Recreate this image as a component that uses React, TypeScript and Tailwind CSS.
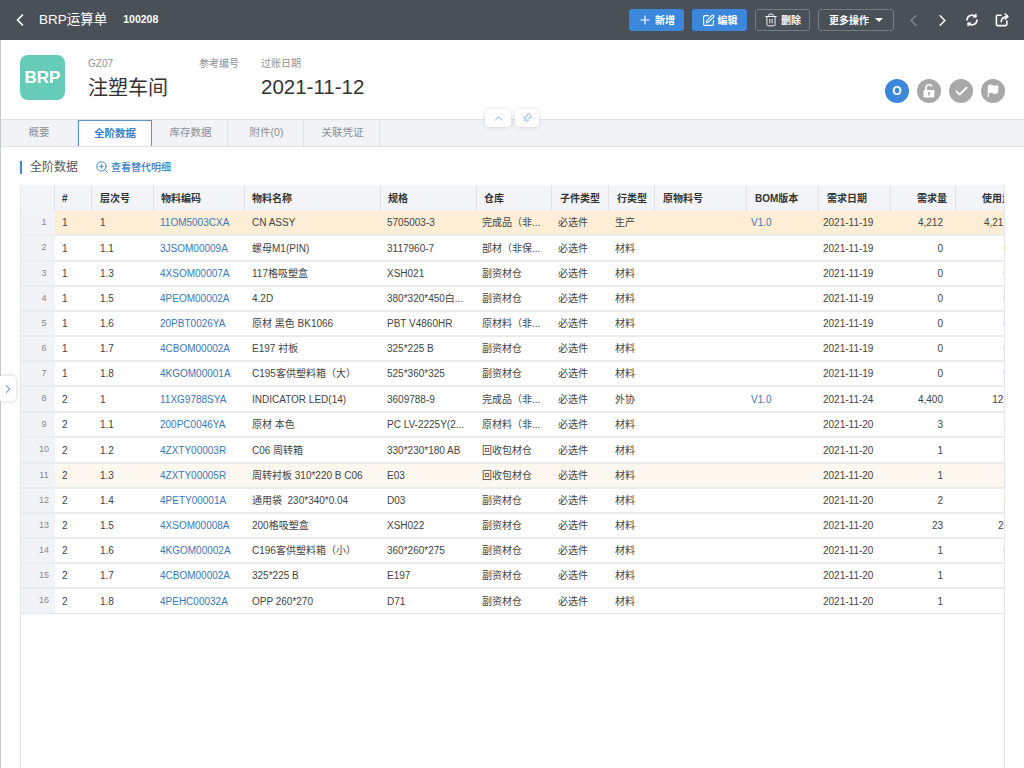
import { Check, ChevronLeft, ChevronRight, ChevronUp, Flag, Pin, Plus, SquarePen, Trash2, ZoomIn } from 'lucide-react';

const GRID = 'grid grid-cols-[34px_37px_62px_91px_136px_96px_75px_57px_46px_92px_72px_72px_65px_65px]';

type Row = {
  a: string; b: string; code: string; name: string; spec: string; wh: string;
  line: string; ver?: string; date: string; qty: string; used: string;
  h: string; bg?: string; thin?: boolean;
};

const rows: Row[] = [
  { a: '1', b: '1', code: '11OM5003CXA', name: 'CN ASSY', spec: '5705003-3', wh: '完成品（非...', line: '生产', ver: 'V1.0', date: '2021-11-19', qty: '4,212', used: '4,212', h: 'h-[25px]', bg: 'bg-[#fdeed5]' },
  { a: '1', b: '1.1', code: '3JSOM00009A', name: '螺母M1(PIN)', spec: '3117960-7', wh: '部材（非保...', line: '材料', date: '2021-11-19', qty: '0', used: '0', h: 'h-[26px]' },
  { a: '1', b: '1.3', code: '4XSOM00007A', name: '117格吸塑盒', spec: 'XSH021', wh: '副资材仓', line: '材料', date: '2021-11-19', qty: '0', used: '0', h: 'h-[25px]' },
  { a: '1', b: '1.5', code: '4PEOM00002A', name: '4.2D', spec: '380*320*450白...', wh: '副资材仓', line: '材料', date: '2021-11-19', qty: '0', used: '0', h: 'h-[25px]' },
  { a: '1', b: '1.6', code: '20PBT0026YA', name: '原材 黑色 BK1066', spec: 'PBT V4860HR', wh: '原材料（非...', line: '材料', date: '2021-11-19', qty: '0', used: '0', h: 'h-[25px]' },
  { a: '1', b: '1.7', code: '4CBOM00002A', name: 'E197 衬板', spec: '325*225 B', wh: '副资材仓', line: '材料', date: '2021-11-19', qty: '0', used: '0', h: 'h-[25px]' },
  { a: '1', b: '1.8', code: '4KGOM00001A', name: 'C195客供塑料箱（大）', spec: '525*360*325', wh: '副资材仓', line: '材料', date: '2021-11-19', qty: '0', used: '0', h: 'h-[25px]' },
  { a: '2', b: '1', code: '11XG9788SYA', name: 'INDICATOR LED(14)', spec: '3609788-9', wh: '完成品（非...', line: '外协', ver: 'V1.0', date: '2021-11-24', qty: '4,400', used: '123', h: 'h-[26px]' },
  { a: '2', b: '1.1', code: '200PC0046YA', name: '原材 本色', spec: 'PC LV-2225Y(2...', wh: '原材料（非...', line: '材料', date: '2021-11-20', qty: '3', used: '3', h: 'h-[25px]' },
  { a: '2', b: '1.2', code: '4ZXTY00003R', name: 'C06 周转箱', spec: '330*230*180 AB', wh: '回收包材仓', line: '材料', date: '2021-11-20', qty: '1', used: '1', h: 'h-[26px]' },
  { a: '2', b: '1.3', code: '4ZXTY00005R', name: '周转衬板 310*220 B C06', spec: 'E03', wh: '回收包材仓', line: '材料', date: '2021-11-20', qty: '1', used: '1', h: 'h-[25px]', bg: 'bg-[#fdf8ef]' },
  { a: '2', b: '1.4', code: '4PETY00001A', name: '通用袋\u00a0\u00a0230*340*0.04', spec: 'D03', wh: '副资材仓', line: '材料', date: '2021-11-20', qty: '2', used: '2', h: 'h-[25px]' },
  { a: '2', b: '1.5', code: '4XSOM00008A', name: '200格吸塑盒', spec: 'XSH022', wh: '副资材仓', line: '材料', date: '2021-11-20', qty: '23', used: '23', h: 'h-[25px]' },
  { a: '2', b: '1.6', code: '4KGOM00002A', name: 'C196客供塑料箱（小）', spec: '360*260*275', wh: '副资材仓', line: '材料', date: '2021-11-20', qty: '1', used: '0', h: 'h-[25px]' },
  { a: '2', b: '1.7', code: '4CBOM00002A', name: '325*225 B', spec: 'E197', wh: '副资材仓', line: '材料', date: '2021-11-20', qty: '1', used: '1', h: 'h-[25px]' },
  { a: '2', b: '1.8', code: '4PEHC00032A', name: 'OPP 260*270', spec: 'D71', wh: '副资材仓', line: '材料', date: '2021-11-20', qty: '1', used: '1', h: 'h-[25px]', thin: true },
];

const Head = ({ label, cls = '' }: { label: string; cls?: string }) => (
  <div className={`flex items-center border-r border-[#dfe2e8] whitespace-nowrap ${cls}`}>{label}</div>
);

const Tab = ({ label, active }: { label: string; active?: boolean }) => (
  <div
    className={
      active
        ? 'flex w-[74px] items-center justify-center border border-b-0 border-[#5b93c7] bg-white text-[10.5px] font-semibold text-[#3a80c9]'
        : 'flex w-[76px] items-center justify-center border-r border-[#e0e2e7] pl-[2px] text-[10.5px] text-[#8a8f97]'
    }
  >
    {label}
  </div>
);

// refresh: two arcs with small heads, lucide's arrows sit too far out
const RefreshIcon = () => (
  <svg width="14" height="14" viewBox="0 0 14 14" fill="none" stroke="white" strokeWidth="1.6" strokeLinecap="round" className="ml-[13px]">
    <path d="M12 7a5 5 0 0 1-8.6 3.4" />
    <path d="M2 7a5 5 0 0 1 8.6-3.4" />
    <path d="M10.9 1.2v2.7H8.3" strokeWidth="1.4" />
    <path d="M3.1 12.8v-2.7h2.6" strokeWidth="1.4" />
  </svg>
);

const OpenIcon = () => (
  <svg width="14" height="14" viewBox="0 0 14 14" fill="none" stroke="white" strokeWidth="1.6" strokeLinecap="round" strokeLinejoin="round" className="ml-[16px] mr-[15px]">
    <path d="M6 2.2H2.4a1 1 0 0 0-1 1v8.4a1 1 0 0 0 1 1h8.4a1 1 0 0 0 1-1V8" />
    <path d="M6.2 8.6c.2-3 2-4.8 6.2-5" />
    <path d="M10.2 1l2.6 2.6-2.6 2.4" />
  </svg>
);

const LockIcon = () => (
  <svg width="14" height="16" viewBox="0 0 14 16">
    <path d="M4 7V4.6a3 3 0 0 1 5.8-1" fill="none" stroke="white" strokeWidth="1.6" />
    <path fillRule="evenodd" fill="white" d="M2.4 7h9.2a.8.8 0 0 1 .8.8v6a.8.8 0 0 1-.8.8H2.4a.8.8 0 0 1-.8-.8v-6a.8.8 0 0 1 .8-.8zM7 9.2a1.2 1.2 0 0 0-.6 2.2v1.4h1.2v-1.4A1.2 1.2 0 0 0 7 9.2z" />
  </svg>
);

const App = () => {
  return (
    <div className="relative flex h-[768px] w-[1024px] flex-col overflow-hidden bg-white font-['Liberation_Sans','Noto_Sans_CJK_SC',sans-serif] text-[#444]">
      {/* top bar */}
      <div className="flex h-10 shrink-0 items-center bg-[#4a5058] pl-[10px] text-white">
        <ChevronLeft size={20} strokeWidth={2} />
        <span className="ml-[9px] text-[13.5px]">BRP运算单</span>
        <span className="ml-[16px] text-[10.5px] font-bold">100208</span>
        <div className="ml-auto flex items-center">
          <button className="flex h-[22px] w-[55px] items-center justify-center gap-[3px] rounded-[3px] bg-[#3b87dc] text-[10px] font-semibold">
            <Plus size={14} strokeWidth={2} />新增
          </button>
          <button className="ml-2 flex h-[22px] w-[55px] items-center justify-center gap-[3px] rounded-[3px] bg-[#3b87dc] text-[10px] font-semibold">
            <SquarePen size={13} strokeWidth={2} />编辑
          </button>
          <button className="ml-2 flex h-[22px] w-[55px] items-center justify-center gap-[3px] rounded-[3px] border border-[#777c83] text-[10px] font-semibold">
            <Trash2 size={14} strokeWidth={1.6} />删除
          </button>
          <button className="ml-2 flex h-[22px] w-[76px] items-center justify-center gap-[6px] rounded-[3px] border border-[#777c83] text-[10px] font-semibold">
            更多操作
            <span className="h-0 w-0 border-x-[4px] border-t-[4px] border-x-transparent border-t-white" />
          </button>
          <ChevronLeft size={19} strokeWidth={1.8} className="ml-[10px] text-[#858a90]" />
          <ChevronRight size={19} strokeWidth={1.8} className="ml-[10px]" />
          <RefreshIcon />
          <OpenIcon />
        </div>
      </div>

      <div className="flex min-h-0 flex-1 flex-col border-l border-[#c9c9c9]">
        {/* document info */}
        <div className="flex h-[79px] shrink-0 pl-[19px] pt-[15px]">
          <div className="flex h-[45px] w-[45px] items-center justify-center rounded-lg bg-[#66ccb8] text-[17px] font-bold text-white">BRP</div>
          <div className="ml-[23px] w-[111px] pt-[2px]">
            <div className="text-[10px] leading-[14px] text-[#8d9199]">GZ07</div>
            <div className="mt-[3px] text-[20px] leading-[28px] text-[#333]">注塑车间</div>
          </div>
          <div className="w-[62px] pt-[2px] text-[10px] leading-[14px] text-[#8d9199]">参考编号</div>
          <div className="pt-[2px]">
            <div className="text-[10px] leading-[14px] text-[#8d9199]">过账日期</div>
            <div className="mt-[2px] text-[20.5px] leading-[28px] text-[#333]">2021-11-12</div>
          </div>
          <div className="ml-auto flex gap-2 pr-[19px] pt-6">
            <div className="flex h-6 w-6 items-center justify-center rounded-full bg-[#3b87dc] text-[12px] font-bold text-white">O</div>
            <div className="flex h-6 w-6 items-center justify-center rounded-full bg-[#a8a8a8] text-white"><LockIcon /></div>
            <div className="flex h-6 w-6 items-center justify-center rounded-full bg-[#a8a8a8] text-white"><Check size={15} strokeWidth={3} /></div>
            <div className="flex h-6 w-6 items-center justify-center rounded-full bg-[#a8a8a8] text-white"><Flag size={14} strokeWidth={2} fill="white" /></div>
          </div>
        </div>

        {/* tabs */}
        <div className="flex h-[28px] shrink-0 border-y border-[#dfe1e6] bg-[#f2f3f7]">
          <div className="flex w-[77px] items-center justify-center border-r border-[#e0e2e7] text-[10.5px] text-[#8a8f97]">概要</div>
          <Tab label="全阶数据" active />
          <Tab label="库存数据" />
          <Tab label="附件(0)" />
          <Tab label="关联凭证" />
        </div>

        {/* section title */}
        <div className="flex h-[38px] shrink-0 items-center pl-[19px] pt-[2px]">
          <span className="h-[13px] w-[2px] bg-[#3b87dc]" />
          <span className="ml-2 text-[12px] text-[#555]">全阶数据</span>
          <ZoomIn size={14} strokeWidth={1.6} className="ml-[17px] text-[#3a80c9]" />
          <span className="ml-[2px] text-[10px] font-medium text-[#3a80c9]">查看替代明细</span>
        </div>

        {/* table */}
        <div className="ml-[19px] mr-[19px] flex min-h-0 flex-1 flex-col overflow-hidden border-x border-[#e4e6ea] text-[10px]">
          <div className={`${GRID} h-[26px] shrink-0 bg-[#f2f4f8] font-semibold text-[#333]`}>
            <Head label="" />
            <Head label="#" cls="pl-[7px]" />
            <Head label="层次号" cls="pl-[8px]" />
            <Head label="物料编码" cls="pl-[7px]" />
            <Head label="物料名称" cls="pl-[7px]" />
            <Head label="规格" cls="pl-[7px]" />
            <Head label="仓库" cls="pl-[7px]" />
            <Head label="子件类型" cls="pl-[8px]" />
            <Head label="行类型" cls="pl-[8px]" />
            <Head label="原物料号" cls="pl-[8px]" />
            <Head label="BOM版本" cls="pl-[8px]" />
            <Head label="需求日期" cls="pl-[8px]" />
            <Head label="需求量" cls="justify-end pr-[8px]" />
            <Head label="使用量" cls="justify-end pr-[8px]" />
          </div>
          {rows.map((r, i) => (
            <div key={i} className={`${GRID} ${r.h} shrink-0 items-stretch ${r.thin ? 'border-b border-[#e4e6ea]' : 'border-b-2 border-[#ebebeb]'} ${r.bg ?? ''}`}>
              <div className="flex items-center justify-center bg-[#f2f3f7] pl-3 text-[9px] text-[#888]">{i + 1}</div>
              <div className="flex items-center pl-[7px]">{r.a}</div>
              <div className="flex items-center pl-[8px]">{r.b}</div>
              <div className="flex items-center whitespace-nowrap pl-[6px] text-[#3a78b8]">{r.code}</div>
              <div className="flex items-center whitespace-nowrap pl-[7px]">{r.name}</div>
              <div className="flex items-center whitespace-nowrap pl-[6px]">{r.spec}</div>
              <div className="flex items-center whitespace-nowrap pl-[5px]">{r.wh}</div>
              <div className="flex items-center pl-[6px]">必选件</div>
              <div className="flex items-center pl-[6px]">{r.line}</div>
              <div />
              <div className="flex items-center pl-[4px] text-[#3a78b8]">{r.ver}</div>
              <div className="flex items-center pl-[4px]">{r.date}</div>
              <div className="flex items-center justify-end pr-[13px]">{r.qty}</div>
              <div className="flex items-center justify-end pr-[12px]">{r.used}</div>
            </div>
          ))}
        </div>
      </div>

      {/* floating controls */}
      <div className="absolute left-[485px] top-[109px] flex h-[18px] w-[26px] items-center justify-center rounded-sm bg-white text-[#6a9fd0] shadow-[0_0_4px_rgba(0,0,0,0.15)]">
        <ChevronUp size={13} strokeWidth={1.6} />
      </div>
      <div className="absolute left-[515px] top-[109px] flex h-[18px] w-6 items-center justify-center rounded-sm bg-white text-[#5a9be0] shadow-[0_0_4px_rgba(0,0,0,0.15)]">
        <Pin size={10} strokeWidth={1.6} className="rotate-45" />
      </div>
      <div className="absolute left-0 top-[376px] flex h-[25px] w-4 items-center justify-center rounded-r-sm bg-white text-[#4a90d9] shadow-[0_0_4px_rgba(0,0,0,0.2)]">
        <ChevronRight size={14} strokeWidth={1.8} />
      </div>
    </div>
  );
};

export default App;
